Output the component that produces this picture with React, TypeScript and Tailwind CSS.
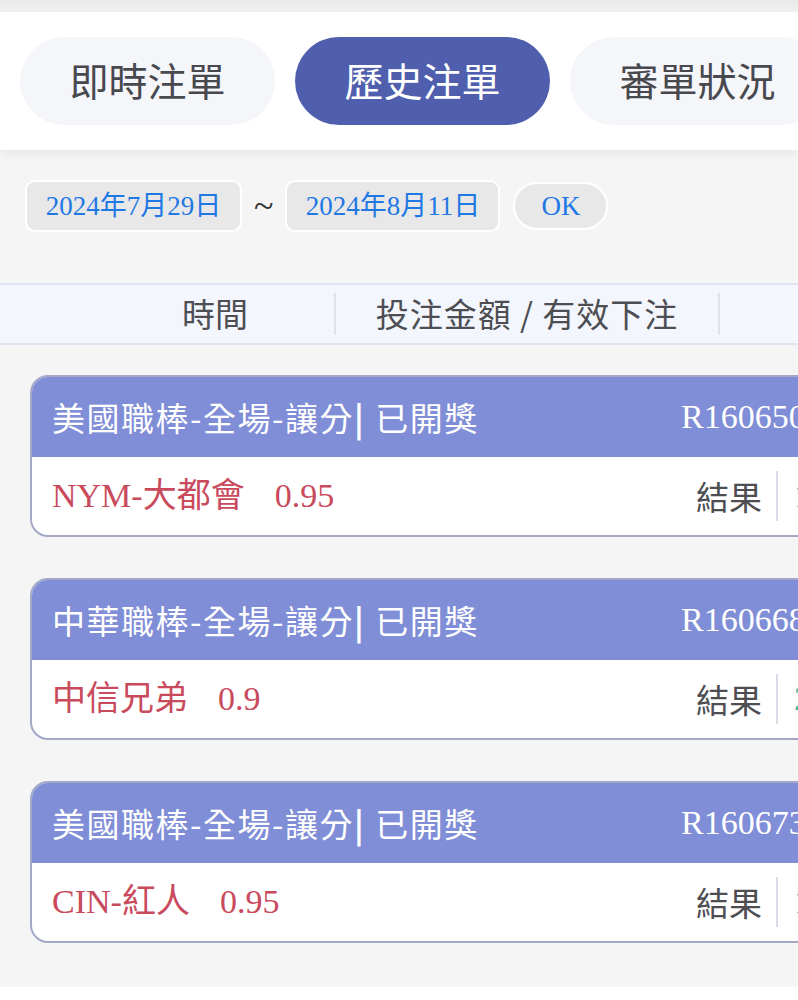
const sans = { fontFamily: '"Noto Sans CJK TC", "Noto Sans", sans-serif' };
const serif = { fontFamily: '"Liberation Serif", "Noto Sans CJK TC", serif' };

const tabs = [
  { label: "即時注單", active: false },
  { label: "歷史注單", active: true },
  { label: "審單狀況", active: false },
];

const bets = [
  { league: "美國職棒-全場-讓分", id: "R1606503", pick: "NYM-大都會", odds: "0.95", result: "1" },
  { league: "中華職棒-全場-讓分", id: "R1606687", pick: "中信兄弟", odds: "0.9", result: "2" },
  { league: "美國職棒-全場-讓分", id: "R1606732", pick: "CIN-紅人", odds: "0.95", result: "1" },
];

function BetCard({ bet }: { bet: (typeof bets)[number] }) {
  return (
    <div className="ml-[30px] w-[800px] shrink-0 overflow-hidden rounded-l-[18px] border-2 border-[#a3a8c6] bg-white">
      <div className="flex h-[80px] items-center bg-[#7f8ed6] pl-[20px] text-white">
        <div className="w-[629px] shrink-0 text-[33px] leading-none tracking-[1.5px] whitespace-nowrap" style={sans}>
          {bet.league}
          <span className="font-bold">|</span>
          <span className="ml-[10px]">已開獎</span>
        </div>
        <div className="text-[34px] leading-none whitespace-nowrap" style={serif}>
          {bet.id}
        </div>
      </div>
      <div className="flex h-[78px] items-center pl-[20px]">
        <div className="w-[644px] shrink-0 text-[34px] leading-none text-[#c84a5c] whitespace-nowrap" style={serif}>
          {bet.pick}
          <span className="ml-[30px]">{bet.odds}</span>
        </div>
        <div className="text-[33px] leading-none text-[#4d4d52]" style={sans}>
          結果
        </div>
        <div className="ml-[14px] h-[50px] w-[2px] bg-[#dcdce8]" />
        <div className="ml-[16px] text-[33px] leading-none text-[#49b3a0]" style={serif}>
          {bet.result}
        </div>
      </div>
    </div>
  );
}

export default function App() {
  return (
    <div className="flex h-[1000px] w-[798px] flex-col overflow-hidden bg-white">
      <div className="h-[12px] shrink-0 bg-gradient-to-b from-[#e9e9e9] to-[#f3f3f3]" />

      <header className="relative z-10 flex h-[138px] shrink-0 items-center gap-[20px] bg-white pl-[20px] shadow-[0_4px_10px_rgba(0,0,0,0.06)]">
        {tabs.map((t) => (
          <div
            key={t.label}
            className={
              t.active
                ? "flex h-[88px] w-[255px] shrink-0 items-center justify-center rounded-full bg-[#4f5fae] pb-[4px] text-[39px] text-white"
                : "flex h-[88px] w-[255px] shrink-0 items-center justify-center rounded-full bg-[#f5f6fa] pb-[4px] text-[39px] text-[#48484f]"
            }
            style={sans}
          >
            {t.label}
          </div>
        ))}
      </header>

      <main className="flex h-[837px] shrink-0 flex-col bg-[#f5f5f5]">
        <div className="flex items-center pt-[30px] pl-[25px]">
          <div
            className="flex h-[52px] w-[217px] items-center justify-center rounded-[10px] border-2 border-white bg-[#e8e8e8] text-[27px] text-[#1f78e4]"
            style={serif}
          >
            2024年7月29日
          </div>
          <span className="mx-[12px] text-[36px] leading-none text-[#333]" style={serif}>
            ~
          </span>
          <div
            className="flex h-[52px] w-[215px] items-center justify-center rounded-[10px] border-2 border-white bg-[#e8e8e8] text-[27px] text-[#1f78e4]"
            style={serif}
          >
            2024年8月11日
          </div>
          <div
            className="ml-[13px] flex h-[48px] w-[95px] items-center justify-center rounded-full border-2 border-white bg-[#e8e8e8] text-[27px] text-[#1f78e4]"
            style={serif}
          >
            OK
          </div>
        </div>

        <div className="mt-[51px] flex h-[62px] items-center border-y-2 border-[#e0e4ee] bg-[#f3f6fd] text-[33px] text-[#4d4d52]" style={sans}>
          <div className="w-[334px] shrink-0 pl-[96px] text-center">時間</div>
          <div className="h-[42px] w-[2px] bg-[#dde2ec]" />
          <div className="w-[382px] shrink-0 text-center tracking-[1px] whitespace-nowrap">投注金額 / 有效下注</div>
          <div className="h-[42px] w-[2px] bg-[#dde2ec]" />
        </div>

        <div className="mt-[30px] flex flex-col gap-[41px]">
          {bets.map((b, i) => (
            <BetCard key={i} bet={b} />
          ))}
        </div>
      </main>
    </div>
  );
}
